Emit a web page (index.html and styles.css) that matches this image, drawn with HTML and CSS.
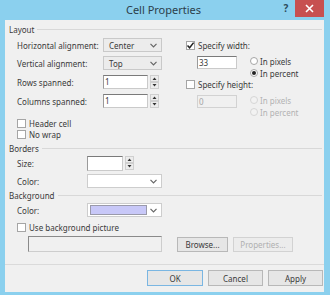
FILE: index.html
```html
<!DOCTYPE html>
<html lang="en">
<head>
    <meta charset="UTF-8">
    <title>Cell Properties</title>
    <link rel="stylesheet" href="styles.css">
</head>
<body>
    <div class="window">
        <div class="titlebar">
            <span class="title">Cell Properties</span>
            <span class="help">?</span>
            <span class="close">
                <svg width="9" height="9" viewBox="0 0 9 9"><path d="M1 1L8 8M8 1L1 8" stroke="#fff" stroke-width="1.6"/></svg>
            </span>
        </div>
        <div class="client">
            <div class="group-head"><span>Layout</span><div class="rule"></div></div>
            <div class="layout">
                <div class="left">
                    <div class="row r1">
                        <span class="label">Horizontal alignment:</span>
                        <div class="select gray"><span>Center</span><svg class="chev" width="7" height="5" viewBox="0 0 7 5"><path d="M0.5 0.8L3.5 3.8L6.5 0.8" fill="none" stroke="#666" stroke-width="1.2"/></svg></div>
                    </div>
                    <div class="row r2">
                        <span class="label">Vertical alignment:</span>
                        <div class="select gray"><span>Top</span><svg class="chev" width="7" height="5" viewBox="0 0 7 5"><path d="M0.5 0.8L3.5 3.8L6.5 0.8" fill="none" stroke="#666" stroke-width="1.2"/></svg></div>
                    </div>
                    <div class="row r3">
                        <span class="label">Rows spanned:</span>
                        <div class="spinner"><div class="input">1</div><svg class="spin" width="9" height="14" viewBox="0 0 9 14"><rect x="0.5" y="0.5" width="8" height="6" fill="#ececec" stroke="#cfcfcf"/><rect x="0.5" y="7.5" width="8" height="6" fill="#ececec" stroke="#cfcfcf"/><path d="M2.5 5L4.5 2.5L6.5 5Z M2.5 9L4.5 11.5L6.5 9Z" fill="#333"/></svg></div>
                    </div>
                    <div class="row r4">
                        <span class="label">Columns spanned:</span>
                        <div class="spinner"><div class="input">1</div><svg class="spin" width="9" height="14" viewBox="0 0 9 14"><rect x="0.5" y="0.5" width="8" height="6" fill="#ececec" stroke="#cfcfcf"/><rect x="0.5" y="7.5" width="8" height="6" fill="#ececec" stroke="#cfcfcf"/><path d="M2.5 5L4.5 2.5L6.5 5Z M2.5 9L4.5 11.5L6.5 9Z" fill="#333"/></svg></div>
                    </div>
                    <div class="checks">
                        <div class="check-row"><span class="box"></span>Header cell</div>
                        <div class="check-row"><span class="box"></span>No wrap</div>
                    </div>
                </div>
                <div class="right">
                    <div class="check-row tall"><span class="box"><svg width="9" height="9" viewBox="0 0 9 9"><path d="M1.5 4.5L3.6 6.8L7.6 1.6" fill="none" stroke="#222" stroke-width="1.5"/></svg></span>Specify width:</div>
                    <div class="size-block">
                        <div class="input wide">33</div>
                        <div class="radios">
                            <div class="radio-row"><span class="radio"></span>In pixels</div>
                            <div class="radio-row"><span class="radio on"></span>In percent</div>
                        </div>
                    </div>
                    <div class="check-row"><span class="box"></span>Specify height:</div>
                    <div class="size-block off">
                        <div class="input wide">0</div>
                        <div class="radios">
                            <div class="radio-row"><span class="radio"></span>In pixels</div>
                            <div class="radio-row"><span class="radio"></span>In percent</div>
                        </div>
                    </div>
                </div>
            </div>

            <div class="group-head borders"><span>Borders</span><div class="rule"></div></div>
            <div class="section">
                <div class="row size-row">
                    <span class="label short">Size:</span>
                    <div class="spinner"><div class="input small"></div><svg class="spin" width="9" height="14" viewBox="0 0 9 14"><rect x="0.5" y="0.5" width="8" height="6" fill="#ececec" stroke="#cfcfcf"/><rect x="0.5" y="7.5" width="8" height="6" fill="#ececec" stroke="#cfcfcf"/><path d="M2.5 5L4.5 2.5L6.5 5Z M2.5 9L4.5 11.5L6.5 9Z" fill="#333"/></svg></div>
                </div>
                <div class="row color-row">
                    <span class="label short">Color:</span>
                    <div class="select white wide-select"><span></span><svg class="chev" width="7" height="5" viewBox="0 0 7 5"><path d="M0.5 0.8L3.5 3.8L6.5 0.8" fill="none" stroke="#666" stroke-width="1.2"/></svg></div>
                </div>
            </div>

            <div class="group-head background"><span>Background</span><div class="rule"></div></div>
            <div class="section">
                <div class="row bg-color-row">
                    <span class="label short">Color:</span>
                    <div class="select white wide-select"><span class="swatch"></span><svg class="chev" width="7" height="5" viewBox="0 0 7 5"><path d="M0.5 0.8L3.5 3.8L6.5 0.8" fill="none" stroke="#666" stroke-width="1.2"/></svg></div>
                </div>
                <div class="check-row pic-check"><span class="box"></span>Use background picture</div>
                <div class="pic-row">
                    <div class="path-field"></div>
                    <button class="btn browse">Browse...</button>
                    <button class="btn props" disabled>Properties...</button>
                </div>
            </div>

            <div class="separator"></div>
            <div class="actions">
                <button class="btn ok">OK</button>
                <button class="btn">Cancel</button>
                <button class="btn">Apply</button>
            </div>
        </div>
    </div>
</body>
</html>
```

FILE: styles.css
```css
* {
    box-sizing: border-box;
}
body {
    margin: 0;
    font-family: "Noto Sans", "Open Sans", sans-serif;
    font-size: 8px;
    color: #3a3a3a;
    background: #8bd0ee;
}
.window {
    width: 330px;
    height: 295px;
    display: flex;
    flex-direction: column;
    padding: 0 6px 3px 5px;
    background: #8bd0ee;
}
.titlebar {
    height: 20px;
    display: flex;
    align-items: flex-start;
}
.title {
    flex: 1;
    text-align: center;
    line-height: 20px;
    font-size: 11px;
    color: #2c3e4a;
    padding-left: 43px;
}
.help {
    width: 14px;
    line-height: 17px;
    font-size: 10px;
    font-weight: bold;
    color: #2c4a5c;
    text-align: center;
    margin-right: 2px;
}
.close {
    width: 29px;
    height: 17px;
    background: #c75050;
    display: flex;
    align-items: center;
    justify-content: center;
}
.close svg {
    display: block;
}
.client {
    flex: 1;
    background: #f0f0f0;
    display: flex;
    flex-direction: column;
}
.group-head {
    height: 12px;
    margin-top: 3px;
    display: flex;
    align-items: center;
    padding-left: 4px;
    padding-right: 2px;
    gap: 3px;
}
.group-head .rule {
    flex: 1;
    height: 1px;
    background: #d8d8d8;
}
.group-head.borders {
    margin-top: 2px;
}
.group-head.background {
    margin-top: 1px;
}
.layout {
    display: flex;
    padding-left: 12px;
    margin-top: 3px;
}
.left {
    width: 145px;
}
.row {
    display: flex;
    align-items: center;
    height: 14px;
}
.r1 {
    margin-bottom: 4px;
}
.r2, .r3 {
    margin-bottom: 5px;
}
.label {
    width: 86px;
}
.label.short {
    width: 70px;
}
.select {
    width: 59px;
    height: 14px;
    border: 1px solid #c9c9c9;
    display: flex;
    align-items: center;
    justify-content: space-between;
    padding: 0 4px 0 5px;
}
.select.gray {
    background: #ececec;
}
.select.white {
    background: #fff;
    border-color: #cdcdcd;
}
.wide-select {
    width: 75px;
    padding-left: 2px;
}
.swatch {
    width: 57px;
    height: 10px;
    background: #c8c8f8;
    border: 1px solid #9a9aaa;
}
.chev {
    display: block;
}
.spinner {
    display: flex;
    align-items: center;
    gap: 2px;
}
.input {
    width: 45px;
    height: 14px;
    background: #fff;
    border: 1px solid #cacaca;
    border-top-color: #7a7a7a;
    border-left-color: #9a9a9a;
    padding-left: 1px;
    line-height: 12px;
}
.input.small {
    width: 36px;
    height: 15px;
}
.input.wide {
    width: 40px;
    height: 13px;
    margin-top: 1px;
    line-height: 11px;
}
.spin {
    display: block;
}
.checks {
    margin-top: 10px;
}
.check-row {
    display: flex;
    align-items: center;
    height: 11px;
    gap: 3px;
}
.check-row.tall {
    height: 14px;
}
.box {
    width: 9px;
    height: 9px;
    background: #fff;
    border: 1px solid #a5a5a5;
    display: flex;
    align-items: center;
    justify-content: center;
}
.box svg {
    display: block;
    flex: none;
}
.right {
    margin-left: 24px;
}
.right > .check-row {
    height: 10px;
}
.right > .check-row.tall {
    height: 14px;
}
.size-block {
    display: flex;
    padding-left: 11px;
    margin-top: 3px;
    height: 24px;
}
.size-block.off {
    margin-top: 5px;
}
.size-block.off .input {
    background: #f0f0f0;
    border-color: #d2d2d2;
    color: #a5a5a5;
}
.radios {
    margin-left: 13px;
}
.radio-row {
    display: flex;
    align-items: center;
    height: 12px;
    gap: 2px;
}
.radio {
    width: 8px;
    height: 8px;
    border-radius: 50%;
    border: 1px solid #a5a5a5;
    background: #fff;
    display: flex;
    align-items: center;
    justify-content: center;
}
.radio.on::after {
    content: "";
    width: 4px;
    height: 4px;
    border-radius: 50%;
    background: #222;
}
.size-block.off .radio-row {
    color: #b3b3b3;
}
.size-block.off .radio {
    border-color: #d6d6d6;
    background: #f2f2f2;
}
.section {
    padding-left: 12px;
}
.size-row {
    margin-top: 2px;
}
.color-row {
    margin-top: 4px;
}
.bg-color-row {
    margin-top: 2px;
}
.pic-check {
    margin-top: 5px;
    height: 10px;
}
.pic-row {
    display: flex;
    align-items: flex-end;
    margin-top: 4px;
    height: 16px;
}
.path-field {
    width: 134px;
    height: 16px;
    margin-left: 11px;
    border: 1px solid #cdcdcd;
    border-top-color: #8a8a8a;
    border-left-color: #8a8a8a;
    background: #f0f0f0;
}
.btn {
    height: 15px;
    margin: 0;
    padding: 0;
    font-family: inherit;
    font-size: 8px;
    color: #3a3a3a;
    background: #e6e6e6;
    border: 1px solid #b8b8b8;
    border-radius: 0;
}
.btn:disabled {
    color: #b0b0b0;
    background: #ececec;
    border-color: #d2d2d2;
}
.browse {
    width: 51px;
    margin-left: 15px;
}
.props {
    width: 60px;
    margin-left: 5px;
}
.separator {
    height: 1px;
    background: #dadada;
    margin-top: 12px;
}
.actions {
    display: flex;
    justify-content: flex-end;
    gap: 5px;
    margin-top: 5px;
    padding-right: 1px;
}
.actions .btn {
    width: 55px;
    height: 16px;
}
.actions .ok {
    width: 56px;
    border-color: #7ab6e2;
}
```
